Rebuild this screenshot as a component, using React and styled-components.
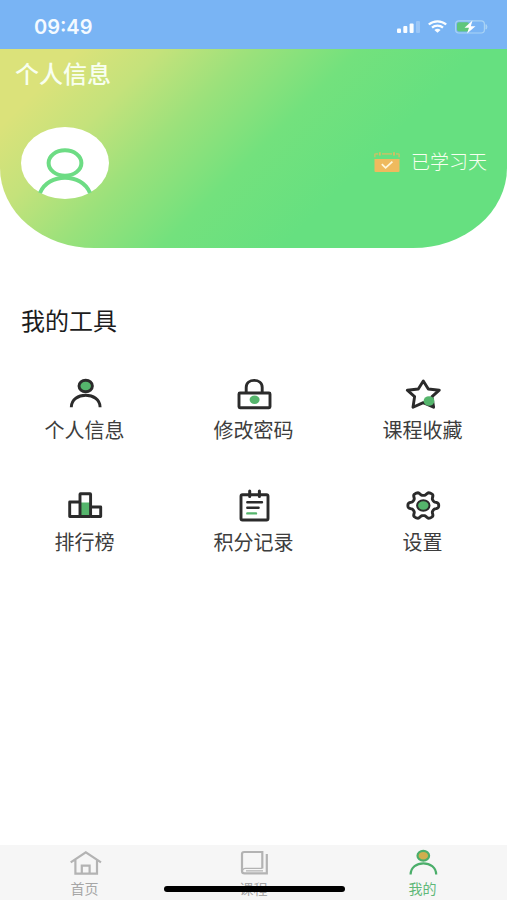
import React from "react";
import styled, { createGlobalStyle } from "styled-components";

const GlobalStyle = createGlobalStyle`
  *, *::before, *::after { box-sizing: border-box; }
  body {
    margin: 0;
    background: #ffffff;
    font-family: "Noto Sans CJK SC", "Noto Sans", sans-serif;
  }
  svg { display: block; flex: none; }
`;

const Page = styled.div`
  display: flex;
  flex-direction: column;
  min-height: 100vh;
`;

const StatusBar = styled.div`
  display: flex;
  align-items: center;
  justify-content: space-between;
  height: 49px;
  padding: 4px 19px 0 34px;
  background: #79b4f4;
  color: #f4faff;
`;

const Clock = styled.time`
  font: 600 20px/24px Inter, sans-serif;
`;

const StatusIcons = styled.div`
  display: flex;
  align-items: center;
  gap: 8px;
`;

const Header = styled.header`
  display: flex;
  flex-direction: column;
  gap: 40px;
  padding: 10px 20px 49px 21px;
  border-radius: 0 0 94px 94px / 0 0 80px 80px;
  background: linear-gradient(135deg, #dbe27a 11%, #c4e27b 23%, #9be17b 36%, #73e17d 51%, #66e080 68%);
  color: #f8fff0;
`;

const PageTitle = styled.h1`
  margin: 0 0 0 -6px;
  font-size: 24px;
  line-height: 28px;
  font-weight: 500;
`;

const Profile = styled.div`
  display: flex;
  align-items: center;
  justify-content: space-between;
`;

const Avatar = styled.button`
  padding: 0;
  border: 0;
  background: none;
  cursor: pointer;
`;

const StudyDays = styled.div`
  display: flex;
  align-items: center;
  gap: 11px;
  padding-bottom: 4px;
  font-size: 19px;
  line-height: 24px;
  font-weight: 300;
`;

const Tools = styled.main`
  padding-top: 57px;
`;

const SectionTitle = styled.h2`
  margin: 0 0 41px;
  padding-left: 21px;
  font-size: 24px;
  line-height: 30px;
  font-weight: 400;
  color: #1c1c1c;
`;

const ToolGrid = styled.div`
  display: grid;
  grid-template-columns: repeat(3, 1fr);
  row-gap: 46px;
`;

const ToolButton = styled.button`
  display: flex;
  flex-direction: column;
  align-items: center;
  gap: 8px;
  padding: 0;
  border: 0;
  background: none;
  color: #3d3d3d;
  font: inherit;
  font-size: 20px;
  line-height: 24px;
  cursor: pointer;
`;

const TabBar = styled.nav`
  position: sticky;
  bottom: 0;
  display: grid;
  grid-template-columns: repeat(3, 1fr);
  margin-top: auto;
  padding: 3px 0;
  background: #f6f6f6;
`;

const Tab = styled.a`
  display: flex;
  flex-direction: column;
  align-items: center;
  color: ${(p) => (p.$active ? "#5fb878" : "#a6a6a6")};
  font-size: 14px;
  line-height: 18px;
  text-decoration: none;
`;

const HomeIndicator = styled.div`
  position: absolute;
  bottom: 8px;
  left: 50%;
  width: 181px;
  height: 6px;
  margin-left: -90px;
  border-radius: 3px;
  background: #000000;
`;

const INK = "#2b2b2b";
const GREEN = "#55b56c";

const ToolSvg = ({ children }) => (
  <svg width="37" height="34" viewBox="0 0 37 34" fill="none" stroke={INK} strokeWidth="2.9" overflow="visible" aria-hidden="true">
    {children}
  </svg>
);

const gearPath = () => {
  const points = [];
  for (let i = 0; i < 120; i += 1) {
    const a = (i / 120) * Math.PI * 2;
    const r = 0.865 + 0.145 * Math.tanh(1.7 * Math.cos(6 * a));
    points.push(`${(19.3 + 15.4 * r * Math.cos(a)).toFixed(2)} ${(17.5 + 13.9 * r * Math.sin(a)).toFixed(2)}`);
  }
  return `M${points.join("L")}Z`;
};

const tools = [
  {
    label: "个人信息",
    icon: (
      <ToolSvg>
        <ellipse cx="19.7" cy="10" rx="6.7" ry="5.8" fill={GREEN} />
        <path d="M5.3 31.3C5.3 15.2 34.1 15.2 34.1 31.3" />
      </ToolSvg>
    ),
  },
  {
    label: "修改密码",
    icon: (
      <ToolSvg>
        <path d="M11.2 17V11.5C11.2 2 27.2 2 27.2 11.5V17" />
        <rect x="4" y="17" width="31" height="14.8" rx="1" />
        <ellipse cx="19.6" cy="23.8" rx="5" ry="4.2" fill={GREEN} stroke="none" />
      </ToolSvg>
    ),
  },
  {
    label: "课程收藏",
    icon: (
      <ToolSvg>
        <path d="M19.3 5L24.3 13L35.3 14.2L28 20.6L29.6 31.2L19.3 26.6L9 31.2L10.6 20.6L3.3 14.2L14.3 13Z" strokeLinejoin="round" />
        <ellipse cx="25" cy="25" rx="5.4" ry="4.8" fill={GREEN} stroke="none" />
      </ToolSvg>
    ),
  },
  {
    label: "排行榜",
    icon: (
      <ToolSvg>
        <path d="M14 28.5H3.7V14H14M24.5 19H34.7V28.5H24.5" strokeLinejoin="round" />
        <rect x="15" y="14.5" width="9" height="13" fill={GREEN} stroke="none" />
        <rect x="14" y="5.8" width="10.6" height="22.7" rx="0.5" />
      </ToolSvg>
    ),
  },
  {
    label: "积分记录",
    icon: (
      <ToolSvg>
        <rect x="6" y="6.8" width="27" height="25.2" rx="1.5" />
        <path d="M14.7 3V8.5M24.4 3V8.5" strokeWidth="3" strokeLinecap="round" />
        <path d="M12.3 14.3H27M12.3 19.8H23.6" strokeWidth="2.4" strokeLinecap="round" />
        <path d="M12.3 25.4H21" stroke={GREEN} strokeWidth="2.4" strokeLinecap="round" />
      </ToolSvg>
    ),
  },
  {
    label: "设置",
    icon: (
      <ToolSvg>
        <path d={gearPath()} />
        <ellipse cx="19.3" cy="17.5" rx="6.2" ry="5.3" fill={GREEN} strokeWidth="2" />
      </ToolSvg>
    ),
  },
];

const TabSvg = ({ stroke, children }) => (
  <svg width="37" height="31" viewBox="0 0 37 31" fill="none" stroke={stroke} strokeWidth="2.2" aria-hidden="true">
    {children}
  </svg>
);

const tabs = [
  {
    label: "首页",
    icon: (
      <TabSvg stroke="#b3b3b3">
        <path d="M4.7 14.4L19.8 4.4L35 14.4M9.4 12V25.6H31V12M15.8 25.6V17.6H23.6V25.6" />
      </TabSvg>
    ),
  },
  {
    label: "课程",
    icon: (
      <TabSvg stroke="#b3b3b3">
        <path d="M27.3 20.4V4H9.2C7.8 4 7 4.8 7 6V23C7 24.6 8 25.4 9.6 25.4H31.8V6" />
        <path d="M7.4 22.5C7.8 21 8.5 20.4 10 20.4H27.3M11 22.9H28" strokeWidth="1.4" />
      </TabSvg>
    ),
  },
  {
    label: "我的",
    active: true,
    icon: (
      <TabSvg stroke="#4bae6a">
        <ellipse cx="19.3" cy="7.7" rx="5.8" ry="4.9" fill="#cfae4e" />
        <path d="M6.6 26.6C6.6 11.5 32.2 11.5 32.2 26.6" />
      </TabSvg>
    ),
  },
];

export default function App() {
  return (
    <Page>
      <GlobalStyle />
      <StatusBar>
        <Clock>09:49</Clock>
        <StatusIcons>
          <svg width="23" height="12" viewBox="0 0 23 12" fill="#fafdff" aria-hidden="true">
            <rect x="0" y="7.5" width="4" height="4.5" rx="1" />
            <rect x="6.3" y="5" width="4" height="7" rx="1" />
            <rect x="12.6" y="2.5" width="4" height="9.5" rx="1" />
            <rect x="19" y="0" width="4" height="12" rx="1" opacity="0.25" />
          </svg>
          <svg width="19" height="13" viewBox="0 0 19 13" fill="none" stroke="#fafdff" strokeWidth="2.3" aria-hidden="true">
            <path d="M0.8 4.5C5.5 0.2 13.5 0.2 18.2 4.5" />
            <path d="M4 7.6C7 4.9 12 4.9 15 7.6" />
            <path d="M6.4 10Q9.5 7.3 12.6 10L9.5 12.8Z" fill="#fafdff" stroke="none" />
          </svg>
          <svg width="33" height="14" viewBox="0 0 33 14" aria-hidden="true">
            <rect x="0.6" y="0.8" width="28.8" height="12.2" rx="3.2" fill="none" stroke="#a9d3f5" strokeWidth="1.2" />
            <rect x="2" y="2.2" width="12" height="9.4" rx="2" fill="#5fc67c" />
            <path d="M31 4.6Q33 6.9 31 9.2Z" fill="#a9d3f5" stroke="#a9d3f5" />
            <path d="M17.5 0.5L9.5 7.8H14L12 13.5L20.5 6.2H15.8Z" fill="#ffffff" />
          </svg>
        </StatusIcons>
      </StatusBar>

      <Header>
        <PageTitle>个人信息</PageTitle>
        <Profile>
          <Avatar type="button" aria-label="头像">
            <svg width="88" height="72" viewBox="0 0 88 72" fill="none" aria-hidden="true">
              <ellipse cx="44" cy="36" rx="44" ry="36" fill="#ffffff" />
              <g stroke="#6ddc84" strokeWidth="4">
                <ellipse cx="44" cy="36" rx="16.4" ry="12.7" />
                <path d="M19 66C27 45.5 61 45.5 69 66" />
              </g>
            </svg>
          </Avatar>
          <StudyDays>
            <svg width="26" height="21" viewBox="0 0 26 21" fill="none" aria-hidden="true">
              <path d="M0.5 8V20Q0.5 21 1.5 21H24.5Q25.5 21 25.5 20V8Z" fill="#efba5e" />
              <path d="M0.8 6.2V4.2Q0.8 2.8 2.4 2.8H4M8 2.8H18M22 2.8H23.6Q25.2 2.8 25.2 4.2V6.2" stroke="#b9c66a" strokeWidth="1.8" />
              <path d="M5.8 1.2V4.6M20 1.2V4.6" stroke="#dcbc60" strokeWidth="1.8" />
              <path d="M7.8 13.2L11.6 16.8L18.4 10.6" stroke="#fff8dc" strokeWidth="1.8" />
            </svg>
            <span>已学习天</span>
          </StudyDays>
        </Profile>
      </Header>

      <Tools>
        <SectionTitle>我的工具</SectionTitle>
        <ToolGrid>
          {tools.map(({ label, icon }) => (
            <ToolButton key={label} type="button">
              {icon}
              <span>{label}</span>
            </ToolButton>
          ))}
        </ToolGrid>
      </Tools>

      <TabBar>
        {tabs.map(({ label, icon, active }) => (
          <Tab key={label} href="#" $active={active} aria-current={active ? "page" : undefined}>
            {icon}
            <span>{label}</span>
          </Tab>
        ))}
        <HomeIndicator />
      </TabBar>
    </Page>
  );
}
